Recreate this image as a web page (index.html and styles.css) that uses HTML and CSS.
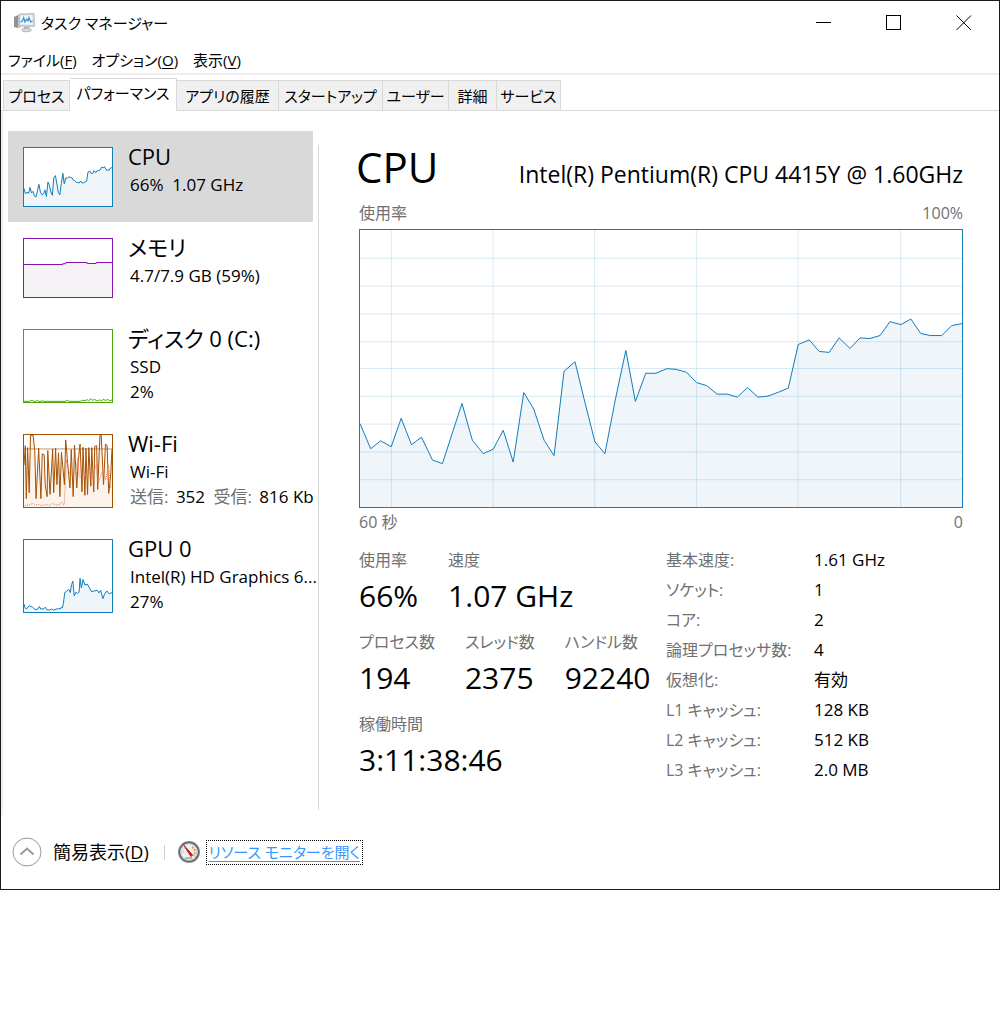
FILE: index.html
```html
<!DOCTYPE html>
<html lang="ja">
<head>
<meta charset="utf-8">
<meta name="viewport" content="width=device-width, initial-scale=1">
<title>タスク マネージャー</title>
<link rel="stylesheet" href="styles.css">
</head>
<body>
<div class="window">
  <header class="titlebar">
    <svg class="app-icon" viewBox="0 0 22 20" aria-hidden="true">
      <path d="M1 4l4-2v13l-4-1z" fill="#8e9296"/>
      <path d="M5 2l3 1v12l-3 0z" fill="#c9cccf"/>
      <path d="M2 6.500h2" stroke="#5cc04a"/>
      <path d="M6 1l15-.5.500 13L6 13z" fill="#d3d6d9" stroke="#aeb2b6" stroke-width=".8"/>
      <path d="M7.500 2.500l12-.3.300 9.500-12.300-.3z" fill="#f3f9fd"/>
      <path d="M7.500 9l2-1 1.200-3.500L12 9l1.700-3 1.300 2 1-3.500 1.600 4.500 2-1" fill="none" stroke="#2f8fce" stroke-width="1.100"/>
      <path d="M11 13.500h5l.5 2.500h-6z" fill="#b4b8bc"/>
      <ellipse cx="13.500" cy="17" rx="5" ry="1.800" fill="#d5d7d9" stroke="#a5a9ad" stroke-width=".7"/>
    </svg>
    <h1 class="app-title">タスク マネージャー</h1>
    <div class="caption-buttons">
      <button class="caption" type="button" aria-label="最小化"><svg viewBox="0 0 16 16"><path d="M0 7.500h15"/></svg></button>
      <button class="caption" type="button" aria-label="最大化"><svg viewBox="0 0 16 16"><path d="M.5.5h14v14H.5z"/></svg></button>
      <button class="caption" type="button" aria-label="閉じる"><svg viewBox="0 0 16 16"><path class="smooth" d="M.5.500l14.500 14.500M15 .5L.5 15"/></svg></button>
    </div>
  </header>

  <nav class="menubar">
    <button type="button">ファイル(<u>F</u>)</button>
    <button type="button">オプション(<u>O</u>)</button>
    <button type="button">表示(<u>V</u>)</button>
  </nav>

  <div class="tabs" role="tablist">
    <button class="tab" type="button" role="tab">プロセス</button>
    <button class="tab tab-active" type="button" role="tab" aria-selected="true">パフォーマンス</button>
    <button class="tab" type="button" role="tab">アプリの履歴</button>
    <button class="tab" type="button" role="tab">スタートアップ</button>
    <button class="tab" type="button" role="tab">ユーザー</button>
    <button class="tab" type="button" role="tab">詳細</button>
    <button class="tab" type="button" role="tab">サービス</button>
  </div>

  <div class="page">
    <aside class="sidebar">
      <button class="resource resource-active" type="button">
        <svg class="thumb blue" viewBox="0 0 604 279" preserveAspectRatio="none" aria-hidden="true">
          <use href="#cpu-area"/><use href="#cpu-line"/>
        </svg>
        <span class="resource-text">
          <span class="resource-name">CPU</span>
          <span class="resource-info">66%&nbsp; 1.07 GHz</span>
        </span>
      </button>
      <button class="resource" type="button">
        <svg class="thumb purple" viewBox="69 354 270 180" preserveAspectRatio="none" aria-hidden="true">
          <path class="area" d="M69 433H186L189 431H195L199 427H260L265 430H288L293 427H339V534H69z"/>
          <path class="line" d="M69 433H186L189 431H195L199 427H260L265 430H288L293 427H339"/>
        </svg>
        <span class="resource-text">
          <span class="resource-name">メモリ</span>
          <span class="resource-info">4.7/7.9 GB (59%)</span>
        </span>
      </button>
      <button class="resource" type="button">
        <svg class="thumb tall green" viewBox="69 57 270 222" preserveAspectRatio="none" aria-hidden="true">
          <path class="line" d="M69 277H86L90 274H96L98 277H105L109 274L114 277H121L126 275L130 277H195L202 274L208 277H242L248 274H258L263 272L267 275L274 269L280 274L286 271L291 275H297L301 272L306 276L312 271L320 274L326 271L331 275L339 273"/>
        </svg>
        <span class="resource-text">
          <span class="resource-name">ディスク 0 (C:)</span>
          <span class="resource-info">SSD</span>
          <span class="resource-info">2%</span>
        </span>
      </button>
      <button class="resource" type="button">
        <svg class="thumb tall brown" viewBox="24 27 270 222" preserveAspectRatio="none" aria-hidden="true">
          <path class="area" d="M24 120L28 60 31 223 35 66 40 205 44 28H52L57 75 61 223 69 68 76 223 80 85 86 88 89 180 95 217 97 75 104 210 112 70 115 205 121 68 125 180 130 82 134 217 139 80 148 180 152 42 158 115 165 190 169 72 175 217 179 58 186 190 190 110 196 55 202 202 205 65 211 213 214 68 219 210 223 66 229 185 232 66 238 203 241 62 247 60 250 195 257 28H261L268 180 274 55 279 60 284 207 290 150 294 70V249H24z"/>
          <path class="rule" d="M24 70H294"/>
          <path class="line" d="M24 120L28 60 31 223 35 66 40 205 44 28H52L57 75 61 223 69 68 76 223 80 85 86 88 89 180 95 217 97 75 104 210 112 70 115 205 121 68 125 180 130 82 134 217 139 80 148 180 152 42 158 115 165 190 169 72 175 217 179 58 186 190 190 110 196 55 202 202 205 65 211 213 214 68 219 210 223 66 229 185 232 66 238 203 241 62 247 60 250 195 257 28H261L268 180 274 55 279 60 284 207 290 150 294 70"/>
          <path class="line sent" d="M27 245L40 242 52 238 57 243 70 241 77 245 92 241 99 245 112 238 122 243 134 242 139 233 147 243 151 175 154 105 165 150 180 145 190 98 193 155 206 163 220 135 232 160 247 115 251 178 266 135 275 165 283 120 290 190"/>
        </svg>
        <span class="resource-text">
          <span class="resource-name">Wi-Fi</span>
          <span class="resource-info">Wi-Fi</span>
          <span class="resource-info"><span class="muted sent-label">送信:</span> 352 <span class="muted recv-label">受信:</span> 816 Kb</span>
        </span>
      </button>
      <button class="resource" type="button">
        <svg class="thumb tall blue" viewBox="69 57 270 222" preserveAspectRatio="none" aria-hidden="true">
          <path class="area" d="M69 254L72 265 76 270 85 260 95 264 103 271 111 271 116 262 121 270 130 269 134 264 139 272 147 273 153 270 160 273 175 268 180 270 183 265 187 266 190 252 194 219 200 215 206 209 211 219 215 194 219 184 223 229 228 218 233 222 238 218 241 175 245 205 250 179 256 196 263 193 270 205 276 216 286 214 294 212 299 220 304 212 311 238 316 224 323 214 330 223 339 219V279H69z"/>
          <path class="line" d="M69 254L72 265 76 270 85 260 95 264 103 271 111 271 116 262 121 270 130 269 134 264 139 272 147 273 153 270 160 273 175 268 180 270 183 265 187 266 190 252 194 219 200 215 206 209 211 219 215 194 219 184 223 229 228 218 233 222 238 218 241 175 245 205 250 179 256 196 263 193 270 205 276 216 286 214 294 212 299 220 304 212 311 238 316 224 323 214 330 223 339 219"/>
        </svg>
        <span class="resource-text">
          <span class="resource-name">GPU 0</span>
          <span class="resource-info">Intel(R) HD Graphics 6...</span>
          <span class="resource-info">27%</span>
        </span>
      </button>
    </aside>

    <main class="detail">
      <div class="detail-head">
        <h2>CPU</h2>
        <p>Intel(R) Pentium(R) CPU 4415Y @ 1.60GHz</p>
      </div>
      <div class="axis axis-top"><span>使用率</span><span>100%</span></div>
      <svg class="chart blue" viewBox="0 0 604 279" preserveAspectRatio="none" role="img" aria-label="CPU 使用率">
        <path id="cpu-area" class="area" d="M0 195L10.700 220.300 20.700 212.300 31.300 218.300 41.300 189.700 51.700 216.300 61.700 208.700 72.700 231.700 82.700 235.300 92.700 204.300 102.300 174.700 112.700 211.700 123.700 225.300 133.700 220.700 143.700 201.700 153.700 233.700 164.300 163.700 174.300 180.300 184.700 211.700 194.700 227.300 204.700 142.300 215.700 132.700 225.700 173.700 235.700 213.300 245.700 225.300 256.300 170.300 266.700 121.300 276.300 172.700 286.700 144.300 297 144.300 307.700 139.700 317 140.300 327.700 143.300 337.700 153.700 347.700 156.700 358.300 165.300 368.300 165.300 378.700 168.300 388.700 158.700 399.300 168.300 409.300 167.300 420 163.300 429.700 159.300 439.700 115.300 450.700 110.700 460.700 122.300 470.700 123.300 480.700 108.700 491.700 119.300 501.700 108.700 511.700 109.300 521.700 106.300 531.700 92.300 542.700 95.300 552.700 89.700 562.700 104.300 572.300 106.300 583.700 106.300 593.700 96.300 604 94.300V279H0z"/>
        <path class="grid" d="M31.500 0V279M133.500 0V279M235.500 0V279M337.500 0V279M439.500 0V279M542.500 0V279M0 28.500H604M0 56.500H604M0 84.500H604M0 112.500H604M0 139.500H604M0 167.500H604M0 195.500H604M0 223.500H604M0 251.500H604"/>
        <path id="cpu-line" class="line" d="M0 195L10.700 220.300 20.700 212.300 31.300 218.300 41.300 189.700 51.700 216.300 61.700 208.700 72.700 231.700 82.700 235.300 92.700 204.300 102.300 174.700 112.700 211.700 123.700 225.300 133.700 220.700 143.700 201.700 153.700 233.700 164.300 163.700 174.300 180.300 184.700 211.700 194.700 227.300 204.700 142.300 215.700 132.700 225.700 173.700 235.700 213.300 245.700 225.300 256.300 170.300 266.700 121.300 276.300 172.700 286.700 144.300 297 144.300 307.700 139.700 317 140.300 327.700 143.300 337.700 153.700 347.700 156.700 358.300 165.300 368.300 165.300 378.700 168.300 388.700 158.700 399.300 168.300 409.300 167.300 420 163.300 429.700 159.300 439.700 115.300 450.700 110.700 460.700 122.300 470.700 123.300 480.700 108.700 491.700 119.300 501.700 108.700 511.700 109.300 521.700 106.300 531.700 92.300 542.700 95.300 552.700 89.700 562.700 104.300 572.300 106.300 583.700 106.300 593.700 96.300 604 94.300"/>
      </svg>
      <div class="axis axis-bottom"><span>60 秒</span><span>0</span></div>

      <div class="stats">
        <div class="live">
          <dl class="live-row">
            <div><dt>使用率</dt><dd>66%</dd></div>
            <div><dt>速度</dt><dd>1.07 GHz</dd></div>
          </dl>
          <dl class="live-row">
            <div><dt>プロセス数</dt><dd>194</dd></div>
            <div><dt>スレッド数</dt><dd>2375</dd></div>
            <div><dt>ハンドル数</dt><dd>92240</dd></div>
          </dl>
          <dl class="live-row">
            <div><dt>稼働時間</dt><dd>3:11:38:46</dd></div>
          </dl>
        </div>
        <table class="specs">
          <tbody>
            <tr><th scope="row">基本速度:</th><td>1.61 GHz</td></tr>
            <tr><th scope="row">ソケット:</th><td>1</td></tr>
            <tr><th scope="row">コア:</th><td>2</td></tr>
            <tr><th scope="row">論理プロセッサ数:</th><td>4</td></tr>
            <tr><th scope="row">仮想化:</th><td>有効</td></tr>
            <tr><th scope="row">L1 キャッシュ:</th><td>128 KB</td></tr>
            <tr><th scope="row">L2 キャッシュ:</th><td>512 KB</td></tr>
            <tr><th scope="row">L3 キャッシュ:</th><td>2.0 MB</td></tr>
          </tbody>
        </table>
      </div>
    </main>
  </div>

  <footer class="footer">
    <button class="fewer" type="button">
      <svg viewBox="0 0 30 30" aria-hidden="true"><circle cx="15" cy="15" r="14"/><path d="M8.500 17.500L15 11.500l6.500 6"/></svg>
      <span>簡易表示(<u>D</u>)</span>
    </button>
    <span class="footer-rule"></span>
    <svg class="gauge" viewBox="0 0 24 24" aria-hidden="true">
      <circle cx="12" cy="12" r="11" fill="#8a9092"/>
      <circle cx="12" cy="12" r="10" fill="#4f5759"/>
      <circle cx="12" cy="12" r="9" fill="#cdd0d0"/>
      <circle cx="12" cy="12" r="7.500" fill="#f1f1ef"/>
      <path d="M15 7a6 6 0 0 1 1.500 9" fill="none" stroke="#e79b4e" stroke-width="2" stroke-dasharray="2 1"/>
      <path d="M6 13a6 6 0 0 1 2-5" fill="none" stroke="#a9adad" stroke-dasharray="1 1"/>
      <path d="M8 18h7" stroke="#b3b6b6" stroke-width="2"/>
      <path d="M7 5.500L15.500 15l-1.500 1.500z" fill="#d8201c" stroke="#b01815" stroke-width="1"/>
    </svg>
    <a class="monitor-link" href="#resource-monitor">リソース モニターを開く</a>
  </footer>
</div>
</body>
</html>
```
FILE: styles.css
```css
* { box-sizing: border-box; }

body {
  margin: 0;
  background: #fff;
  color: #000;
  font-family: "Open Sans", "Noto Sans CJK JP", sans-serif;
  font-size: 16px;
  line-height: 24px;
  font-feature-settings: "palt";
}

h1, h2, p, dl, dd { margin: 0; font-weight: 400; }

button {
  margin: 0;
  padding: 0;
  border: 0;
  background: none;
  color: inherit;
  font: inherit;
  font-feature-settings: inherit;
  text-align: left;
  white-space: nowrap;
}

u { text-underline-offset: 2px; }

.window { border: 1px solid #1c1a1c; }

/* Title bar */
.titlebar {
  display: flex;
  align-items: center;
  height: 44px;
  padding-left: 12px;
}
.app-icon { width: 22px; height: 20px; margin-right: 6px; }
.app-title { flex: 1; font-size: 15px; line-height: 24px; }
.caption-buttons { display: flex; }
.caption {
  display: flex;
  align-items: center;
  justify-content: center;
  width: 70px;
  height: 44px;
}
.caption svg {
  width: 16px;
  height: 16px;
  fill: none;
  stroke: #000;
  shape-rendering: crispEdges;
}
.caption .smooth { shape-rendering: auto; }

/* Menu and tabs */
.menubar {
  display: flex;
  gap: 15px;
  padding: 3px 7px 1px;
  border-bottom: 2px solid #eee;
  font-size: 15px;
}
.tabs {
  display: grid;
  grid-template-columns: 67px 107px 102px 104px 66px 48px 64px;
  align-items: end;
  padding: 3px 2px 0;
  border-bottom: 1px solid #d9d9d9;
  font-size: 15px;
}
.tab {
  height: 30px;
  border: 1px solid #d9d9d9;
  border-width: 1px 1px 0 0;
  background: #f0f0f0;
  text-align: center;
}
.tab:first-child { border-left-width: 1px; }
.tab-active {
  height: 33px;
  margin-bottom: -1px;
  padding-bottom: 4px;
  background: #fff;
}

/* Performance page */
.page {
  display: flex;
  padding: 20px 36px 5px 5px;
  border-left: 2px solid #f0f0f0;
  margin-bottom: 19px;
}
.sidebar { flex: 0 0 305px; min-width: 0; }
.resource {
  display: flex;
  gap: 15px;
  width: 100%;
  padding: 16px 15px 15px;
}
.resource-active { background: #d9d9d9; }
.thumb {
  flex: none;
  width: 90px;
  height: 60px;
  border: 1px solid;
  background: #fff;
}
.tall { height: 74px; }
.resource-text { display: flex; flex-direction: column; }
.resource-name { height: 25px; margin-top: -5px; font-size: 22px; line-height: 28px; }
.resource-info { height: 25px; padding: 5px 0 0 2px; font-size: 17px; line-height: 25px; }
.muted { color: #707070; }
.sent-label { margin-right: 3px; }
.recv-label { margin: 0 3px 0 4px; }

.blue { color: #117dbb; --fill: #f0f5fa; }
.purple { color: #8b12ae; --fill: #f4f2f4; }
.green { color: #4da60c; --fill: #eff7e9; }
.brown { color: #a74f01; --fill: #fcf3eb; }
.area { fill: var(--fill); }
.line, .grid, .rule {
  fill: none;
  stroke: currentColor;
  stroke-width: 1px;
  vector-effect: non-scaling-stroke;
}
.rule { opacity: .6; }
.sent { stroke: #e77a4c; stroke-dasharray: 1 1; }
.grid { stroke: #117dbb; stroke-opacity: .16; shape-rendering: crispEdges; }

.detail {
  flex: 1;
  min-width: 0;
  margin: 14px 0 0 5px;
  padding-left: 40px;
  border-left: 1px solid #d9d9d9;
}
.detail-head {
  display: flex;
  align-items: baseline;
  justify-content: space-between;
  height: 56px;
}
.detail-head h2 { margin-left: -3px; font-size: 42px; line-height: 44px; }
.detail-head p { font-size: 23px; line-height: 32px; white-space: nowrap; }
.axis {
  display: flex;
  justify-content: space-between;
  color: #707070;
}
.axis-top { padding-bottom: 4px; }
.chart { display: block; width: 100%; height: 279px; border: 1px solid; }
.axis-bottom { padding-top: 2px; }

.stats { display: flex; padding: 14px 0 16px; }
.live { flex: 0 0 307px; }
.live-row { display: flex; gap: 30px; height: 82px; white-space: nowrap; }
.live dt, .specs th { color: #707070; }
.live dd { margin-top: 4px; font-size: 30px; line-height: 40px; }
.specs { border-collapse: collapse; margin-top: -3px; height: 240px; }
.specs th, .specs td { height: 30px; padding: 0; text-align: left; font-weight: 400; white-space: nowrap; }
.specs th { width: 148px; }
.specs td { font-size: 17px; }

/* Footer */
.footer { display: flex; align-items: center; height: 36px; margin-bottom: 19px; padding-left: 11px; }
.fewer { display: flex; align-items: center; gap: 11px; font-size: 18px; }
.fewer svg { width: 30px; height: 30px; fill: none; stroke: #999; }
.fewer path { stroke-width: 2; }
.footer-rule { width: 1px; height: 15px; margin: 0 12px 0 15px; background: #d0d0d0; }
.gauge { width: 24px; height: 24px; }
.monitor-link {
  margin-left: 5px;
  padding: 0 2px;
  border: 1px dotted #000;
  color: #3399ff;
  font-size: 15px;
  line-height: 23px;
  text-underline-offset: 3px;
}
```
